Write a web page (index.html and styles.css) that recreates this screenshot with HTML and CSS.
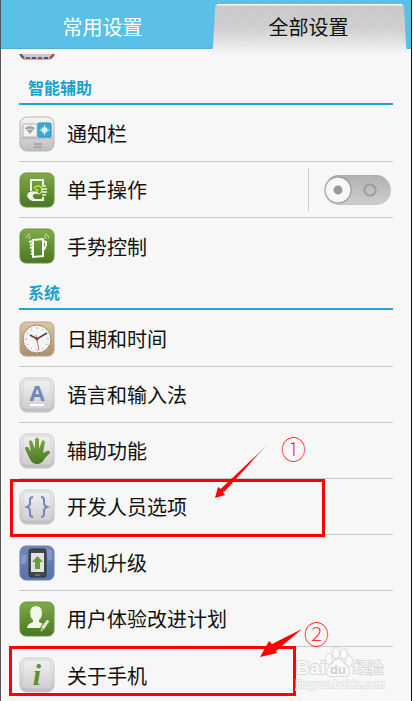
FILE: index.html
```html
<!DOCTYPE html>
<html lang="zh-CN">
<head>
  <meta charset="UTF-8">
  <meta name="viewport" content="width=device-width, initial-scale=1.0">
  <title>全部设置</title>
  <link rel="stylesheet" href="styles.css">
</head>
<body>
  <!-- shared gradients -->
  <svg class="defs" width="0" height="0" aria-hidden="true">
    <defs>
      <linearGradient id="green" x1="0" y1="0" x2="0" y2="1"><stop offset="0" stop-color="#80aa49"/><stop offset="1" stop-color="#497722"/></linearGradient>
      <linearGradient id="silver" x1="0" y1="0" x2="0" y2="1"><stop offset="0" stop-color="#f6f6f6"/><stop offset="1" stop-color="#bcbdc0"/></linearGradient>
      <linearGradient id="plate" x1="0" y1="0" x2="0" y2="1"><stop offset="0" stop-color="#f1f1f2"/><stop offset="1" stop-color="#cfcfd2"/></linearGradient>
      <linearGradient id="tan" x1="0" y1="0" x2="0" y2="1"><stop offset="0" stop-color="#dcc7a3"/><stop offset="1" stop-color="#a98e6c"/></linearGradient>
      <linearGradient id="blue" x1="0" y1="0" x2="0" y2="1"><stop offset="0" stop-color="#6f86ba"/><stop offset="1" stop-color="#5873ae"/></linearGradient>
      <linearGradient id="fade" x1="1" y1="0" x2="0" y2="1"><stop offset="0" stop-color="#f00" stop-opacity=".2"/><stop offset=".4" stop-color="#f00"/></linearGradient>
    </defs>
  </svg>

  <div class="screen">
    <nav class="tabs">
      <button class="tab" type="button">常用设置</button>
      <button class="tab active" type="button">全部设置</button>
    </nav>

    <main class="content">
      <div class="cut-icon">
        <svg width="36" height="6" viewBox="0 0 36 6">
          <path d="M1 0H35Q34 5 30 5H6Q2 5 1 0Z" fill="#c9c9ce"/>
          <path d="M1 0Q2 5 6 5H30Q34 5 35 0" fill="none" stroke="#777" stroke-width="1"/>
          <path d="M1 0L5 4M13 4H17M25 4H29" stroke="#475b86" stroke-width="2"/>
          <path d="M7 4H11M19 4H23M31 4L35 0" stroke="#b2474a" stroke-width="2"/>
        </svg>
      </div>

      <h2>智能辅助</h2>
      <ul class="list">
        <li class="row">
          <a href="#">
            <svg class="icon" viewBox="0 0 36 36">
              <rect x="1" y="1" width="34" height="34" rx="7" fill="url(#silver)" stroke="#b5b5b7"/>
              <path d="M2 22H34" stroke="#aaa"/>
              <rect x="4" y="8" width="14" height="13" rx="1" fill="#f2f2f2" stroke="#b5b5b5"/>
              <rect x="19" y="7" width="13" height="14" rx="1" fill="#35aad6" stroke="#2b90ba"/>
              <path d="M6 12Q11 8 16 12L11 18Z" fill="#a3a3a3"/>
              <path d="M8 14Q11 12 14 14" stroke="#ddd" fill="none"/>
              <circle cx="25.500" cy="14" r="3" fill="#d7f2fc"/>
              <path d="M25.500 9V19M20.500 14H30.500" stroke="#d7f2fc"/>
              <path d="M15 28H23M15 31H23" stroke="#8c8c8c"/>
            </svg>
            <span>通知栏</span>
          </a>
        </li>
        <li class="row">
          <label for="one-hand">
            <svg class="icon" viewBox="0 0 36 36">
              <rect x="1" y="1" width="34" height="34" rx="6" fill="url(#green)" stroke="#6b9140"/>
              <path d="M12 19V8H24V13M24 25V28H14" fill="none" stroke="#f1f6e8" stroke-width="2"/>
              <path d="M19 20Q12 18 9 21Q7 24 10 27L13 29H24V27H16Q13 25 14 23Q16 21 19 22Z" fill="#f1f6e8"/>
              <path d="M15 17A4 4 0 1 1 19 22" fill="none" stroke="#b6ec3e" stroke-width="1.500"/>
              <circle cx="18" cy="18" r="1.500" fill="#b6ec3e"/>
              <path d="M23 14H27M23 17H28M23 20H28M23 23H27" stroke="#f1f6e8" stroke-width="1.500"/>
            </svg>
            <span>单手操作</span>
          </label>
          <div class="toggle">
            <input id="one-hand" class="switch" type="checkbox">
          </div>
        </li>
        <li class="row">
          <a href="#">
            <svg class="icon" viewBox="0 0 36 36">
              <rect x="1" y="1" width="34" height="34" rx="6" fill="url(#green)" stroke="#6b9140"/>
              <path d="M14 12L24 11V28L14 29Z" fill="none" stroke="#f1f6e8" stroke-width="2"/>
              <path d="M10 14L14 13M11 17L14 16M11 20L14 19M12 23L15 22M12 26L15 25M24 13L27 14V17L25 22" fill="none" stroke="#f1f6e8" stroke-width="2"/>
              <path d="M7 10Q8 7 11 6M10 11Q10 9 12 8M26 6Q29 7 30 10M25 8Q27 9 27 11" fill="none" stroke="#dce9c7"/>
            </svg>
            <span>手势控制</span>
          </a>
        </li>
      </ul>

      <h2>系统</h2>
      <ul class="list">
        <li class="row">
          <a href="#">
            <svg class="icon" viewBox="0 0 36 36">
              <rect x="1" y="1" width="34" height="34" rx="6" fill="url(#tan)" stroke="#b8a284"/>
              <circle cx="18" cy="18" r="14" fill="#f4f4f4" stroke="#a08a6e"/>
              <path d="M18 6V8M18 28V30M6 18H8M28 18H30M12 8L13 9M24 8L23 9M8 12L9 13M28 24L27 23M8 24L9 23M12 28L13 27M24 28L23 27" stroke="#aaa"/>
              <path d="M11 14L18 18L28 12" fill="none" stroke="#444" stroke-width="1.500"/>
              <path d="M17 14L20 29" stroke="#dc6264"/>
              <circle cx="18" cy="18" r="1.500" fill="#8c3033"/>
            </svg>
            <span>日期和时间</span>
          </a>
        </li>
        <li class="row">
          <a href="#">
            <svg class="icon" viewBox="0 0 36 36">
              <rect x="1" y="1" width="34" height="34" rx="7" fill="url(#silver)" stroke="#c6c6c6"/>
              <rect x="4" y="3" width="28" height="28" rx="4" fill="url(#plate)" stroke="#d4d4d6"/>
              <text class="glyph letter" x="18" y="24" text-anchor="middle">A</text>
              <path d="M11 28H25" stroke="#fff" stroke-width="2"/>
            </svg>
            <span>语言和输入法</span>
          </a>
        </li>
        <li class="row">
          <a href="#">
            <svg class="icon" viewBox="0 0 36 36">
              <rect x="1" y="1" width="34" height="34" rx="7" fill="url(#silver)" stroke="#c6c6c6"/>
              <rect x="4" y="3" width="28" height="28" rx="4" fill="url(#plate)" stroke="#d4d4d6"/>
              <path d="M11 26L6 16Q6 13 9 14L12 19L10 9Q11 6 13 8L16 16V6Q18 3 20 6V16L23 8Q25 6 26 9L24 20L28 18Q31 17 31 20L26 25Q23 31 18 31Q13 31 11 26Z" fill="url(#green)"/>
            </svg>
            <span>辅助功能</span>
          </a>
        </li>
        <li class="row">
          <a href="#">
            <svg class="icon" viewBox="0 0 36 36">
              <rect x="1" y="1" width="34" height="34" rx="7" fill="url(#silver)" stroke="#c6c6c6"/>
              <rect x="4" y="3" width="28" height="28" rx="4" fill="url(#plate)" stroke="#d4d4d6"/>
              <path d="M14 8Q11 8 11 11V14Q11 17 8 18Q11 19 11 22V25Q11 28 14 28M22 8Q25 8 25 11V14Q25 17 28 18Q25 19 25 22V25Q25 28 22 28" fill="none" stroke="#7288b8" stroke-width="2"/>
            </svg>
            <span>开发人员选项</span>
          </a>
          <div class="mark mark-dev"></div>
          <svg class="arrow arrow-dev" viewBox="0 0 56 58">
            <path d="M54 1L10 49L7 46Z" fill="url(#fade)"/>
            <path d="M1 55L4 44L7 46L18 35L20 37L9 49L11 52Z" fill="#f00"/>
          </svg>
          <span class="step step-dev">①</span>
        </li>
        <li class="row">
          <a href="#">
            <svg class="icon" viewBox="0 0 36 36">
              <rect x="1" y="1" width="34" height="34" rx="6" fill="url(#blue)" stroke="#6a80b2"/>
              <path d="M2 11Q5 8 8 11L7 18L2 20ZM27 4L33 5V14L29 16Z" fill="#8498c6"/>
              <rect x="10" y="4" width="17" height="28" rx="2" fill="#45464a" stroke="#303238"/>
              <rect x="12" y="8" width="13" height="19" fill="#dfe2e0"/>
              <path d="M18.500 11L24 17H21V24H16V17H13Z" fill="#6b9e30"/>
              <path d="M16 30H21" stroke="#999"/>
            </svg>
            <span>手机升级</span>
          </a>
        </li>
        <li class="row">
          <a href="#">
            <svg class="icon" viewBox="0 0 36 36">
              <rect x="1" y="1" width="34" height="34" rx="6" fill="url(#green)" stroke="#6b9140"/>
              <path d="M17 5Q23 5 23 12Q23 17 20 19V21L24 23L21 27H8Q8 23 14 21V19Q11 16 11 11Q12 5 17 5Z" fill="#f1f6e8"/>
              <path d="M21 31L22 26L28 18L31 20L25 29Z" fill="#dce9c7" stroke="#5f8a32"/>
              <path d="M22 27L25 29" stroke="#5f8a32"/>
            </svg>
            <span>用户体验改进计划</span>
          </a>
        </li>
        <li class="row">
          <a href="#">
            <svg class="icon" viewBox="0 0 36 36">
              <rect x="1" y="1" width="34" height="34" rx="7" fill="url(#silver)" stroke="#c6c6c6"/>
              <rect x="4" y="3" width="28" height="28" rx="4" fill="url(#plate)" stroke="#d4d4d6"/>
              <text class="glyph info" x="18" y="28" text-anchor="middle">i</text>
            </svg>
            <span>关于手机</span>
          </a>
          <div class="mark mark-about"></div>
          <svg class="arrow arrow-about" viewBox="0 0 44 30">
            <path d="M43 1L17 23L18 25L1 29L10 13L13 16Z" fill="#f00"/>
          </svg>
          <span class="step step-about">②</span>
          <svg class="watermark" viewBox="0 0 92 46">
            <text class="brand" x="1" y="27">Bai</text>
            <g class="paw">
              <ellipse cx="34" cy="12" rx="3" ry="5"/>
              <ellipse cx="41" cy="6" rx="3" ry="5"/>
              <ellipse cx="49" cy="7" rx="3" ry="5"/>
              <ellipse cx="54" cy="14" rx="3" ry="5"/>
              <path d="M43 12Q46 12 49 17Q54 20 54 25Q53 30 47 29H39Q32 30 32 25Q32 21 37 18Q40 12 43 12Z"/>
            </g>
            <text class="du" x="43" y="27" text-anchor="middle">du</text>
            <text class="jingyan" x="58" y="26">经验</text>
            <text class="site" x="1" y="41">jingyan.baidu.com</text>
          </svg>
        </li>
      </ul>
    </main>
  </div>
</body>
</html>
```
FILE: styles.css
```css
* {
  box-sizing: border-box;
}
body {
  margin: 0;
  background: #fff;
  color: #111;
  font-family: "Noto Sans CJK SC", sans-serif;
}
.defs {
  position: absolute;
}
.screen {
  height: 100vh;
  margin-right: 1px;
  overflow: hidden;
  background: #f7f7f7;
  border-left: 1px solid #555;
  border-right: 1px solid #0b0b18;
}

/* tabs */
.tabs {
  display: flex;
  height: 53px;
  padding-right: 4px;
  background: linear-gradient(#5ac0e7 0, #5ac0e7 47px, #4aa9cf 49px, #fff 49px, #fff 51px, #f1f1f1 53px);
}
.tab {
  flex: 1;
  height: 53px;
  padding: 0 8px 0 0;
  border: 0;
  background: none;
  color: #fff;
  font-family: inherit;
  font-size: 20px;
  line-height: 53px;
}
.tab.active {
  flex: 0 0 48%;
  height: 49px;
  margin-top: 4px;
  padding: 0 2px 4px 0;
  line-height: 45px;
  color: #111;
  background:
    repeating-linear-gradient(135deg, rgba(255, 255, 255, 0.15) 0, rgba(255, 255, 255, 0.15) 1px, transparent 1px, transparent 3px),
    linear-gradient(#fff 0, #fff 1px, #c6c6c6 2px, #cdcdcd 50%, #f3f3f3 100%);
  clip-path: polygon(0 100%, 0 93%, 1px 86%, 3px 5%, 4px 1px, 6px 0, calc(100% - 6px) 0, calc(100% - 4px) 1px, calc(100% - 3px) 5%, calc(100% - 1px) 86%, 100% 93%, 100% 100%);
}

/* list */
.content {
  padding: 0 18px;
}
.cut-icon {
  height: 16px;
  padding-top: 1px;
}
.cut-icon svg {
  display: block;
}
h2 {
  height: 36px;
  margin: 0 0 1px;
  padding-left: 9px;
  border-bottom: 2px solid #1ba5d3;
  color: #1ba0cd;
  font-size: 16px;
  line-height: 37px;
}
.list {
  margin: 0;
  padding: 0;
  list-style: none;
}
.row {
  position: relative;
  display: flex;
  height: 56px;
  border-bottom: 1px solid #c9c9c9;
}
.row:last-child {
  border-bottom: 0;
}
.row a,
.row label {
  display: flex;
  flex: 1;
  align-items: center;
  gap: 12px;
  color: inherit;
  font-size: 20px;
  text-decoration: none;
}
.icon {
  width: 36px;
  height: 36px;
}
.glyph {
  font-weight: bold;
}
.letter {
  font-family: "Open Sans", sans-serif;
  font-size: 22px;
  fill: #7187b8;
}
.info {
  font-family: "Liberation Serif", serif;
  font-size: 30px;
  font-style: italic;
  fill: #628d37;
}

/* switch */
.toggle {
  display: flex;
  align-items: center;
  height: 44px;
  margin-top: 6px;
  padding: 0 2px 0 15px;
  border-left: 1px solid #d2d2d2;
}
.switch {
  width: 67px;
  height: 30px;
  margin: 0;
  border: 1px solid #c4c4c4;
  border-top-color: #aaa;
  border-radius: 15px;
  appearance: none;
  background:
    radial-gradient(circle at 13px 14px, #999 0, #999 4px, #fafafa 5px, #f4f4f4 12px, #8d8d8d 13px, transparent 14px),
    radial-gradient(circle at 45px 14px, transparent 4px, #9c9c9c 5px, #9c9c9c 6px, transparent 7px),
    linear-gradient(#b2b2b2, #cdcdcd);
}

/* marks over the rows */
.mark,
.arrow,
.step,
.watermark {
  position: absolute;
  pointer-events: none;
}
.mark {
  border: 3px solid #f00;
}
.mark-dev {
  top: 0;
  left: -9px;
  width: 315px;
  height: 58px;
  z-index: 1;
}
.mark-about {
  top: -1px;
  left: -10px;
  width: 287px;
  height: 50px;
}
.arrow-dev {
  top: -36px;
  left: 195px;
  width: 56px;
  height: 58px;
  z-index: 1;
}
.arrow-about {
  top: -19px;
  left: 240px;
  width: 44px;
  height: 30px;
}
.step {
  color: #f00;
  font-size: 25px;
  font-weight: 100;
  line-height: 24px;
}
.step-dev {
  top: -43px;
  left: 262px;
}
.step-about {
  top: -26px;
  left: 285px;
}
.watermark {
  top: 0;
  left: 276px;
  width: 92px;
  height: 46px;
  fill: #fafafa;
  stroke: #dadada;
  stroke-width: 2px;
  paint-order: stroke;
  font-family: "Liberation Sans", sans-serif;
}
.brand {
  font-size: 19px;
  font-weight: bold;
}
.du {
  font-size: 13px;
  font-weight: bold;
  fill: #d0d0d0;
  stroke: none;
}
.jingyan {
  font-family: "Noto Sans CJK SC", sans-serif;
  font-size: 15px;
}
.site {
  font-size: 11px;
  stroke: #e4e4e4;
}
```
